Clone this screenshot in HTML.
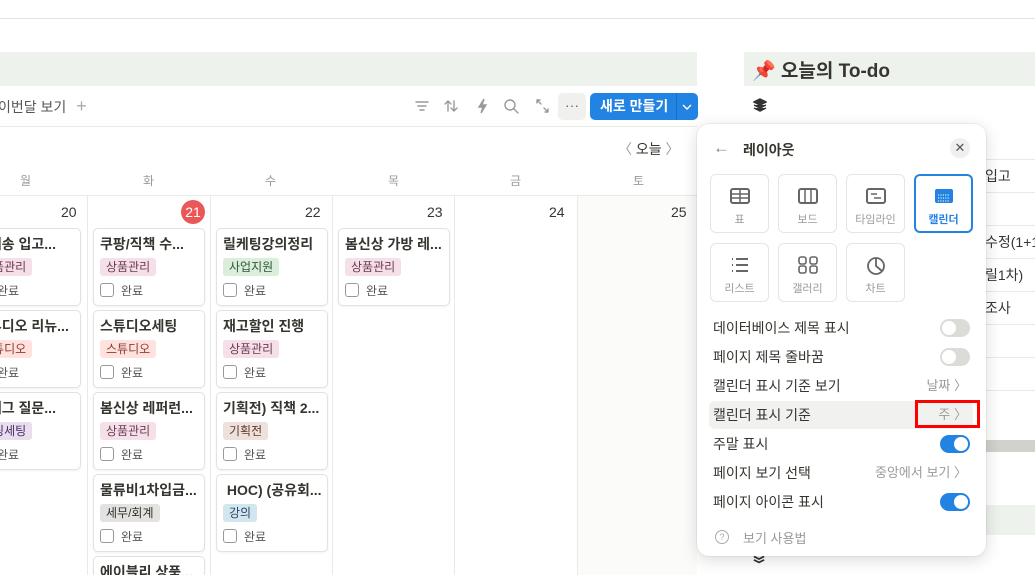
<!DOCTYPE html>
<html><head><meta charset="utf-8"><style>
*{box-sizing:border-box;margin:0;padding:0}
html,body{width:1035px;height:575px;overflow:hidden}
body{background:#fff;font-family:"Liberation Sans","Noto Sans CJK KR",sans-serif;color:#37352f;position:relative}
.a{position:absolute}
.card{position:absolute;width:112px;height:78px;background:#fff;border:1px solid #e3e2e0;border-radius:5px;box-shadow:0 1px 2px rgba(0,0,0,.06);overflow:hidden}
.card .t{position:absolute;left:6px;top:5px;font-size:14px;font-weight:bold;white-space:nowrap;color:#37352f}
.tag{position:absolute;left:6px;top:29px;height:18px;padding:0 6px;font-size:12px;line-height:18px;border-radius:3px;white-space:nowrap}
.chk{position:absolute;left:6px;top:54px;width:14px;height:14px;border:1px solid #999;border-radius:3px}
.cl{position:absolute;left:27px;top:53px;font-size:12px;color:#555}
.pk{background:#f5e0e9;color:#6c3b52}.gr{background:#dbeddb;color:#2b593f}.rd{background:#ffe2dd;color:#8a3b2e}.pu{background:#e8deee;color:#492f64}.br{background:#eee0da;color:#603b2c}.gy{background:#e3e2e0;color:#32302c}.bl{background:#d3e5ef;color:#28456c}
.vl{position:absolute;top:195px;bottom:0;width:1px;background:#e9e9e7}
.dn{position:absolute;top:204px;font-size:14px;color:#37352f}
.wd{position:absolute;top:172px;font-size:12px;color:#9b9a97}
.row{position:absolute;left:12px;width:264px;height:28px;font-size:14px;line-height:28px;padding-left:4px;color:#37352f}
.tg{position:absolute;right:3px;top:5px;width:30px;height:18px;border-radius:9px;background:#dcdbd8}
.tg::after{content:"";position:absolute;left:2px;top:2px;width:14px;height:14px;border-radius:50%;background:#fff}
.tg.on{background:#2383e2}.tg.on::after{left:14px}
.val{position:absolute;right:6px;top:0;font-size:13px;color:#9b9a97}
.lb{position:absolute;width:59px;height:59px;border:1px solid #e6e5e3;border-radius:6px;text-align:center}
.lb span{position:absolute;left:0;right:0;top:36px;font-size:11px;color:#9b9a97}
.lb svg{position:absolute;left:19px;top:12px}
.rl{position:absolute;left:985px;right:0;height:1px;background:#e9e9e7}
.rt{position:absolute;left:985px;font-size:14px;white-space:nowrap}
</style></head><body>
<div class="a" style="left:0;top:18px;width:1035px;height:1px;background:#e3e3e3"></div>
<div class="a" style="left:0;top:52px;width:697px;height:34px;background:#edf2ed"></div>
<div class="a" style="left:744px;top:52px;width:291px;height:34px;background:#edf2ed"></div>
<div class="a" style="left:752px;top:56px;font-size:19px;font-weight:bold;color:#37352f">📌 오늘의 To-do</div>
<div class="a" style="left:753px;top:98px;font-size:14px">
<svg width="14" height="14" viewBox="0 0 14 14"><path d="M7 1L13 4 7 7 1 4z M1 7l6 3 6-3 M1 10l6 3 6-3" fill="#333" stroke="#333" stroke-width="1.5"/></svg></div>
<!-- toolbar -->
<div class="a" style="left:-2px;top:96px;font-size:14px;color:#555">이번달 보기 <span style="color:#aaa;font-size:18px;margin-left:6px">+</span></div>
<svg class="a" style="left:412px;top:96px" width="140" height="20" viewBox="0 0 140 20">
<g fill="none" stroke="#999" stroke-width="1.4" stroke-linecap="round">
<path d="M4 6h12M6 10h8M8 14h4"/>
<path d="M36 5v10M33 8l3-3 3 3M42 15V5M39 12l3 3 3-3"/>
<path d="M72 3l-5 8h4l-2 6 5-8h-4z" fill="#999"/>
<circle cx="98" cy="9" r="5"/><path d="M102 13l4 4"/>
<path d="M125 4l4 4M125 4v3M125 4h3M136 16l-4-4M136 16v-3M136 16h-3"/>
</g></svg>
<div class="a" style="left:558px;top:93px;width:28px;height:27px;background:#f0f0ef;border-radius:5px;text-align:center;font-size:14px;line-height:24px;color:#666">···</div>
<div class="a" style="left:590px;top:93px;width:108px;height:27px;background:#2383e2;border-radius:5px;color:#fff;font-size:14px;font-weight:bold;line-height:27px;padding-left:10px">새로 만들기<span style="position:absolute;left:86px;top:0;width:1px;height:27px;background:#1a6fc4"></span><svg style="position:absolute;left:92px;top:10px" width="10" height="8"><path d="M1 2l4 4 4-4" fill="none" stroke="#fff" stroke-width="1.4"/></svg></div>
<div class="a" style="left:0;top:126px;width:697px;height:1px;background:#e9e9e7"></div>
<div class="a" style="left:618px;top:139px;font-size:14px;color:#999">〈 <span style="color:#37352f">오늘</span> 〉</div>
<div class="wd" style="left:20px">월</div><div class="wd" style="left:143px">화</div><div class="wd" style="left:265px">수</div><div class="wd" style="left:388px">목</div><div class="wd" style="left:510px">금</div><div class="wd" style="left:633px">토</div>
<div class="a" style="left:0;top:195px;width:697px;height:1px;background:#e9e9e7"></div>
<div class="a" style="left:578px;top:196px;width:119px;height:379px;background:#fbfbfa"></div>
<div class="vl" style="left:87px"></div><div class="vl" style="left:210px"></div><div class="vl" style="left:332px"></div><div class="vl" style="left:454px"></div><div class="vl" style="left:577px"></div>
<div class="dn" style="left:61px">20</div>
<div class="a" style="left:181px;top:200px;width:24px;height:24px;border-radius:50%;background:#eb5757;color:#fff;font-size:14px;text-align:center;line-height:24px">21</div>
<div class="dn" style="left:305px">22</div><div class="dn" style="left:427px">23</div><div class="dn" style="left:549px">24</div><div class="dn" style="left:671px">25</div>
<!-- col 20 -->
<div class="card" style="left:-31px;top:228px"><div class="t">직배송 입고...</div><div class="tag pk">상품관리</div><div class="cl">완료</div></div>
<div class="card" style="left:-31px;top:310px"><div class="t">스튜디오 리뉴...</div><div class="tag rd">스튜디오</div><div class="cl">완료</div></div>
<div class="card" style="left:-31px;top:392px"><div class="t">보재그 질문...</div><div class="tag pu">세팅세팅</div><div class="cl">완료</div></div>
<!-- col 21 -->
<div class="card" style="left:93px;top:228px"><div class="t">쿠팡/직책 수...</div><div class="tag pk">상품관리</div><div class="chk"></div><div class="cl">완료</div></div>
<div class="card" style="left:93px;top:310px"><div class="t">스튜디오세팅</div><div class="tag rd">스튜디오</div><div class="chk"></div><div class="cl">완료</div></div>
<div class="card" style="left:93px;top:392px"><div class="t">봄신상 레퍼런...</div><div class="tag pk">상품관리</div><div class="chk"></div><div class="cl">완료</div></div>
<div class="card" style="left:93px;top:474px"><div class="t">물류비1차입금...</div><div class="tag gy">세무/회계</div><div class="chk"></div><div class="cl">완료</div></div>
<div class="card" style="left:93px;top:556px;height:19px;border-bottom:none;border-radius:5px 5px 0 0"><div class="t">에이블리 상품...</div></div>
<!-- col 22 -->
<div class="card" style="left:216px;top:228px"><div class="t">릴케팅강의정리</div><div class="tag gr">사업지원</div><div class="chk"></div><div class="cl">완료</div></div>
<div class="card" style="left:216px;top:310px"><div class="t">재고할인 진행</div><div class="tag pk">상품관리</div><div class="chk"></div><div class="cl">완료</div></div>
<div class="card" style="left:216px;top:392px"><div class="t">기획전) 직책 2...</div><div class="tag br">기획전</div><div class="chk"></div><div class="cl">완료</div></div>
<div class="card" style="left:216px;top:474px"><div class="t">&nbsp;HOC) (공유회...</div><div class="tag bl">강의</div><div class="chk"></div><div class="cl">완료</div></div>
<!-- col 23 -->
<div class="card" style="left:338px;top:228px"><div class="t">봄신상 가방 레...</div><div class="tag pk">상품관리</div><div class="chk"></div><div class="cl">완료</div></div>
<!-- right list -->
<div class="rl" style="top:159px"></div><div class="rl" style="top:192px"></div><div class="rl" style="top:225px"></div><div class="rl" style="top:258px"></div><div class="rl" style="top:291px"></div><div class="rl" style="top:324px"></div><div class="rl" style="top:357px"></div><div class="rl" style="top:390px"></div>
<div class="rt" style="top:166px">입고</div>
<div class="rt" style="top:232px">수정(1+1</div>
<div class="rt" style="top:265px">릴1차)</div>
<div class="rt" style="top:298px">조사</div>
<div class="a" style="left:985px;top:440px;width:50px;height:12px;background:#d3d1cb"></div>
<div class="a" style="left:985px;top:505px;width:50px;height:30px;background:#edf2ed"></div>
<div class="a" style="left:753px;top:552px"><svg width="12" height="14" viewBox="0 0 14 14"><path d="M1 4l6 3 6-3 M1 8l6 3 6-3" fill="none" stroke="#333" stroke-width="2"/></svg></div>
<!-- popup -->
<div class="a" style="left:697px;top:124px;width:289px;height:432px;background:#fff;border-radius:12px;box-shadow:0 0 0 1px rgba(15,15,15,.05),0 4px 16px rgba(15,15,15,.15)">
<div class="a" style="left:16px;top:14px;font-size:17px;color:#888">←</div>
<div class="a" style="left:46px;top:16px;font-size:14px;font-weight:bold">레이아웃</div>
<div class="a" style="left:253px;top:14px;width:20px;height:20px;border-radius:50%;background:#efefee;text-align:center;font-size:13px;line-height:20px;color:#555">✕</div>
<div class="lb" style="left:13px;top:50px"><svg width="20" height="18"><rect x="1" y="2" width="18" height="14" rx="2" fill="none" stroke="#666" stroke-width="2"/><path d="M1 7h18M1 11h18M10 2v14" stroke="#666" stroke-width="1.5"/></svg><span>표</span></div>
<div class="lb" style="left:81px;top:50px"><svg width="20" height="18"><rect x="1" y="2" width="18" height="14" rx="2" fill="none" stroke="#666" stroke-width="2"/><path d="M7 2v14M13 2v14" stroke="#666" stroke-width="1.5"/></svg><span>보드</span></div>
<div class="lb" style="left:149px;top:50px"><svg width="20" height="18"><rect x="1" y="2" width="18" height="14" rx="2" fill="none" stroke="#666" stroke-width="2"/><path d="M5 7h6M8 11h7" stroke="#666" stroke-width="1.5"/></svg><span>타임라인</span></div>
<div class="lb" style="left:217px;top:50px;border:2px solid #2383e2"><svg width="20" height="18" style="left:18px;top:11px"><rect x="1" y="2" width="18" height="14" rx="2" fill="#2383e2"/><path d="M4 8h12M4 11h12M4 14h12" stroke="#fff" stroke-width="1" stroke-dasharray="1.2 1.2"/></svg><span style="color:#2383e2;font-weight:bold;top:35px">캘린더</span></div>
<div class="lb" style="left:13px;top:119px"><svg width="20" height="18"><path d="M2 3h1M2 9h1M2 15h1M6 3h12M6 9h12M6 15h12" stroke="#666" stroke-width="2"/></svg><span>리스트</span></div>
<div class="lb" style="left:81px;top:119px"><svg width="20" height="18"><rect x="1" y="1" width="7" height="7" rx="2" fill="none" stroke="#666" stroke-width="1.6"/><rect x="12" y="1" width="7" height="7" rx="2" fill="none" stroke="#666" stroke-width="1.6"/><rect x="1" y="10" width="7" height="7" rx="2" fill="none" stroke="#666" stroke-width="1.6"/><rect x="12" y="10" width="7" height="7" rx="2" fill="none" stroke="#666" stroke-width="1.6"/></svg><span>갤러리</span></div>
<div class="lb" style="left:149px;top:119px"><svg width="20" height="20"><circle cx="10" cy="10" r="8" fill="none" stroke="#666" stroke-width="1.8"/><path d="M10 2v8l6 5" fill="none" stroke="#666" stroke-width="1.8"/></svg><span>차트</span></div>
<div class="row" style="top:190px">데이터베이스 제목 표시<div class="tg"></div></div>
<div class="row" style="top:219px">페이지 제목 줄바꿈<div class="tg"></div></div>
<div class="row" style="top:248px">캘린더 표시 기준 보기<div class="val">날짜 〉</div></div>
<div class="row" style="top:277px;background:#f1f1ef;border-radius:6px">캘린더 표시 기준<div class="val">주 〉</div></div>
<div class="a" style="left:218px;top:276px;width:65px;height:28px;border:3px solid #f00"></div>
<div class="row" style="top:306px">주말 표시<div class="tg on"></div></div>
<div class="row" style="top:335px">페이지 보기 선택<div class="val">중앙에서 보기 〉</div></div>
<div class="row" style="top:364px">페이지 아이콘 표시<div class="tg on"></div></div>
<div class="a" style="left:18px;top:406px;width:14px;height:14px;border:1.5px solid #aaa;border-radius:50%;font-size:9px;text-align:center;line-height:12px;color:#aaa">?</div>
<div class="a" style="left:46px;top:404px;font-size:13px;color:#9b9a97">보기 사용법</div>
</div>
</body></html>
